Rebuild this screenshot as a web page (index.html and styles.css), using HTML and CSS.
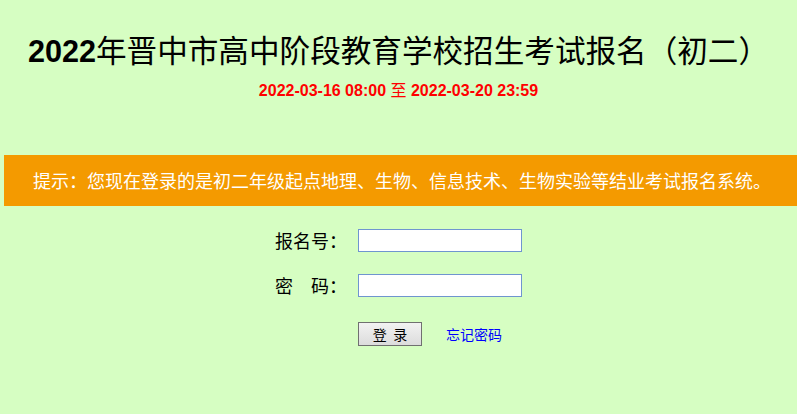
FILE: index.html
```html
<!DOCTYPE html>
<html lang="zh-CN">
<head>
  <meta charset="UTF-8" />
  <title>2022年晋中市高中阶段教育学校招生考试报名（初二）</title>
  <link rel="stylesheet" href="styles.css">
</head>
<body>
  <!-- Header -->
  <h1 class="title"><b>2022</b>年晋中市高中阶段教育学校招生考试报名（初二）</h1>
  <p class="period">2022-03-16 08:00 <span class="to">至</span> 2022-03-20 23:59</p>

  <!-- Notice -->
  <div class="notice">提示：您现在登录的是初二年级起点地理、生物、信息技术、生物实验等结业考试报名系统。</div>

  <!-- Login -->
  <form class="login" onsubmit="return false">
    <label for="regNo">报名号：</label>
    <input type="text" id="regNo" name="regNo">

    <label for="pwd">密&emsp;码：</label>
    <input type="password" id="pwd" name="pwd">

    <span></span>
    <div class="actions">
      <button type="submit">登&nbsp;&nbsp;录</button>
      <a href="#">忘记密码</a>
    </div>
  </form>
</body>
</html>
```

FILE: styles.css
```css
body {
  margin: 0;
  background-color: #d6fec2;
  font-family: "Noto Sans CJK SC", sans-serif;
  color: #000;
}

/* Header */
.title {
  margin: 0;
  padding-top: 29px;
  font-size: 30.6px;
  line-height: 40px;
  font-weight: normal;
  text-align: center;
}

.title b {
  font-family: "Liberation Sans", Arial, sans-serif;
  font-weight: bold;
}

.period {
  margin: 8px 0 0;
  font-family: "Liberation Sans", Arial, "Noto Sans CJK SC", sans-serif;
  font-size: 16px;
  line-height: 20px;
  font-weight: bold;
  color: #ff0000;
  text-align: center;
}

.period .to {
  font-family: "Noto Sans CJK SC", sans-serif;
  font-weight: normal;
}

/* Notice */
.notice {
  margin: 54px 0 0 4px;
  height: 51px;
  background-color: #f49a00;
  color: #fff;
  font-size: 18px;
  line-height: 51px;
  text-align: center;
  padding-left: 3px;
  white-space: nowrap;
}

/* Login */
.login {
  display: grid;
  grid-template-columns: 83px 164px;
  row-gap: 22px;
  justify-content: center;
  align-items: center;
  margin-top: 23px;
}

.login label {
  font-size: 18px;
  line-height: 23px;
  white-space: nowrap;
}

.login input {
  box-sizing: border-box;
  width: 164px;
  height: 23px;
  margin: 0;
  border: 1px solid #6f95cf;
  background: #fff;
  padding: 1px 3px;
}

.actions {
  display: flex;
  align-items: center;
  gap: 24px;
  margin-top: 3px;
  white-space: nowrap;
}

.actions button {
  width: 64px;
  height: 24px;
  padding: 0;
  border: 1px solid #707070;
  background: linear-gradient(#f2f2f2, #dcdcdc);
  font-family: "Noto Sans CJK SC", sans-serif;
  font-size: 14px;
  color: #000;
}

.actions a {
  color: #0000ff;
  font-size: 14px;
  text-decoration: none;
}
```
